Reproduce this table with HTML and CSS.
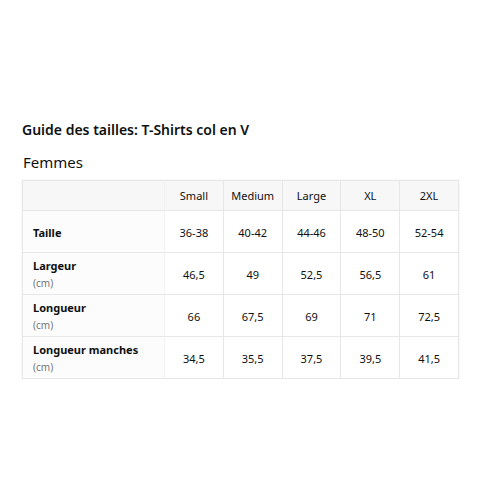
FILE: index.html
```html
<!DOCTYPE html>
<html lang="fr">
<head>
<meta charset="utf-8">
<title>Guide des tailles</title>
<link rel="stylesheet" href="styles.css">
</head>
<body>
<main class="guide">
  <h1 class="guide-title">Guide des tailles: T-Shirts col en V</h1>
  <h2 class="guide-sub">Femmes</h2>
  <table class="size-table">
    <colgroup>
      <col class="col-label">
      <col><col><col><col><col>
    </colgroup>
    <thead>
      <tr>
        <th class="label-cell"></th>
        <th>Small</th>
        <th>Medium</th>
        <th>Large</th>
        <th>XL</th>
        <th>2XL</th>
      </tr>
    </thead>
    <tbody>
      <tr>
        <td class="label-cell"><span class="label">Taille</span></td>
        <td>36-38</td><td>40-42</td><td>44-46</td><td>48-50</td><td>52-54</td>
      </tr>
      <tr>
        <td class="label-cell"><span class="label">Largeur</span><span class="unit">(cm)</span></td>
        <td>46,5</td><td>49</td><td>52,5</td><td>56,5</td><td>61</td>
      </tr>
      <tr>
        <td class="label-cell"><span class="label">Longueur</span><span class="unit">(cm)</span></td>
        <td>66</td><td>67,5</td><td>69</td><td>71</td><td>72,5</td>
      </tr>
      <tr>
        <td class="label-cell"><span class="label">Longueur manches</span><span class="unit">(cm)</span></td>
        <td>34,5</td><td>35,5</td><td>37,5</td><td>39,5</td><td>41,5</td>
      </tr>
    </tbody>
  </table>
</main>
</body>
</html>
```
FILE: styles.css
```css
html, body {
  margin: 0;
  padding: 0;
  background: #ffffff;
}
body {
  font-family: "Noto Sans", "Open Sans", sans-serif;
  color: #0f1111;
}
.guide {
  padding: 121px 0 0 22px;
}
.guide-title {
  margin: 0;
  font-size: 14px;
  font-weight: 600;
  line-height: 18px;
}
.guide-sub {
  margin: 13px 0 0 1px;
  font-size: 15px;
  font-weight: 400;
  line-height: 20px;
}
.size-table {
  margin-top: 8px;
  width: 437px;
  border-collapse: collapse;
  table-layout: fixed;
  font-size: 11px;
  box-shadow: 0 0 2px rgba(0,0,0,0.08);
}
.col-label {
  width: 142px;
}
.size-table th,
.size-table td {
  border: 1px solid #e7e7e7;
  text-align: center;
  font-weight: 400;
  padding: 0;
}
.size-table th {
  height: 29px;
  background: #f7f7f7;
}
.size-table td {
  height: 40px;
  background: #ffffff;
  padding-top: 1px;
}
.size-table .label-cell {
  text-align: left;
  padding-left: 10px;
  background: #fcfcfc;
  border-right-color: #f2f2f2;
}
.size-table th.label-cell {
  background: #f7f7f7;
}
.label {
  display: block;
  font-weight: 700;
  line-height: 15px;
}
.unit {
  display: block;
  margin-top: 2px;
  color: #767676;
  font-size: 10px;
  line-height: 16px;
}
```
